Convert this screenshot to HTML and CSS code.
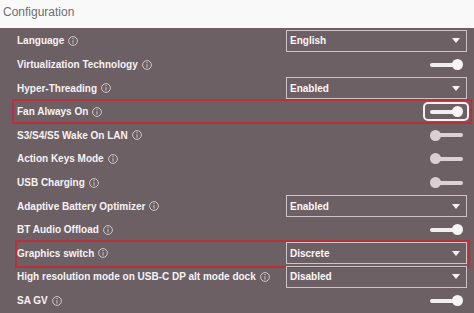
FILE: index.html
```html
<!DOCTYPE html>
<html lang="en">
<head>
<meta charset="utf-8">
<title>Configuration</title>
<link rel="stylesheet" href="styles.css">
</head>
<body>
<div class="screen">
  <div class="header">Configuration</div>
  <div class="panel">
    <div class="row">
      <span class="label">Language <svg class="info" viewBox="0 0 10 10"><circle cx="5" cy="5" r="4.4"/><line x1="5" y1="4.2" x2="5" y2="7.6"/><circle class="dot" cx="5" cy="2.7" r="0.6"/></svg></span>
      <div class="select"><span>English</span><i class="arrow"></i></div>
    </div>
    <div class="row">
      <span class="label">Virtualization Technology <svg class="info" viewBox="0 0 10 10"><circle cx="5" cy="5" r="4.4"/><line x1="5" y1="4.2" x2="5" y2="7.6"/><circle class="dot" cx="5" cy="2.7" r="0.6"/></svg></span>
      <div class="toggle on"><i class="track"></i><i class="knob"></i></div>
    </div>
    <div class="row">
      <span class="label">Hyper-Threading <svg class="info" viewBox="0 0 10 10"><circle cx="5" cy="5" r="4.4"/><line x1="5" y1="4.2" x2="5" y2="7.6"/><circle class="dot" cx="5" cy="2.7" r="0.6"/></svg></span>
      <div class="select"><span>Enabled</span><i class="arrow"></i></div>
    </div>
    <div class="row marked fan">
      <span class="label">Fan Always On <svg class="info" viewBox="0 0 10 10"><circle cx="5" cy="5" r="4.4"/><line x1="5" y1="4.2" x2="5" y2="7.6"/><circle class="dot" cx="5" cy="2.7" r="0.6"/></svg></span>
      <div class="focus"><div class="toggle on"><i class="track"></i><i class="knob"></i></div></div>
    </div>
    <div class="row">
      <span class="label">S3/S4/S5 Wake On LAN <svg class="info" viewBox="0 0 10 10"><circle cx="5" cy="5" r="4.4"/><line x1="5" y1="4.2" x2="5" y2="7.6"/><circle class="dot" cx="5" cy="2.7" r="0.6"/></svg></span>
      <div class="toggle off"><i class="knob"></i><i class="track"></i></div>
    </div>
    <div class="row">
      <span class="label">Action Keys Mode <svg class="info" viewBox="0 0 10 10"><circle cx="5" cy="5" r="4.4"/><line x1="5" y1="4.2" x2="5" y2="7.6"/><circle class="dot" cx="5" cy="2.7" r="0.6"/></svg></span>
      <div class="toggle off"><i class="knob"></i><i class="track"></i></div>
    </div>
    <div class="row">
      <span class="label">USB Charging <svg class="info" viewBox="0 0 10 10"><circle cx="5" cy="5" r="4.4"/><line x1="5" y1="4.2" x2="5" y2="7.6"/><circle class="dot" cx="5" cy="2.7" r="0.6"/></svg></span>
      <div class="toggle off"><i class="knob"></i><i class="track"></i></div>
    </div>
    <div class="row">
      <span class="label">Adaptive Battery Optimizer <svg class="info" viewBox="0 0 10 10"><circle cx="5" cy="5" r="4.4"/><line x1="5" y1="4.2" x2="5" y2="7.6"/><circle class="dot" cx="5" cy="2.7" r="0.6"/></svg></span>
      <div class="select"><span>Enabled</span><i class="arrow"></i></div>
    </div>
    <div class="row">
      <span class="label">BT Audio Offload <svg class="info" viewBox="0 0 10 10"><circle cx="5" cy="5" r="4.4"/><line x1="5" y1="4.2" x2="5" y2="7.6"/><circle class="dot" cx="5" cy="2.7" r="0.6"/></svg></span>
      <div class="toggle on"><i class="track"></i><i class="knob"></i></div>
    </div>
    <div class="row marked gfx">
      <span class="label">Graphics switch <svg class="info" viewBox="0 0 10 10"><circle cx="5" cy="5" r="4.4"/><line x1="5" y1="4.2" x2="5" y2="7.6"/><circle class="dot" cx="5" cy="2.7" r="0.6"/></svg></span>
      <div class="select"><span>Discrete</span><i class="arrow"></i></div>
    </div>
    <div class="row">
      <span class="label">High resolution mode on USB-C DP alt mode dock <svg class="info" viewBox="0 0 10 10"><circle cx="5" cy="5" r="4.4"/><line x1="5" y1="4.2" x2="5" y2="7.6"/><circle class="dot" cx="5" cy="2.7" r="0.6"/></svg></span>
      <div class="select"><span>Disabled</span><i class="arrow"></i></div>
    </div>
    <div class="row">
      <span class="label">SA GV <svg class="info" viewBox="0 0 10 10"><circle cx="5" cy="5" r="4.4"/><line x1="5" y1="4.2" x2="5" y2="7.6"/><circle class="dot" cx="5" cy="2.7" r="0.6"/></svg></span>
      <div class="toggle on"><i class="track"></i><i class="knob"></i></div>
    </div>
  </div>
</div>
</body>
</html>
```
FILE: styles.css
```css
html, body {
  margin: 0;
  padding: 0;
  background: #6d6064;
}
.screen {
  width: 474px;
  height: 313px;
  overflow: hidden;
  display: flex;
  flex-direction: column;
  font-family: "Liberation Sans", Arial, sans-serif;
}
.header {
  height: 28px;
  flex: none;
  box-sizing: border-box;
  padding: 5px 0 0 3px;
  background: #f9f9f9;
  color: #6e6e6e;
  font-size: 12px;
  line-height: 15px;
}
.panel {
  flex: 1;
  background: #6d6064;
  padding-top: 1.2px;
  display: flex;
  flex-direction: column;
}
.row {
  height: 23.6px;
  flex: none;
  display: flex;
  align-items: center;
  justify-content: space-between;
  padding: 0 7px 0 17px;
  position: relative;
}
.label {
  display: flex;
  align-items: center;
  gap: 4px;
  color: #f6f2f4;
  font-weight: bold;
  font-size: 10px;
  white-space: nowrap;
}
.info {
  width: 10px;
  height: 10px;
  fill: none;
  stroke: #d9d0d4;
  stroke-width: 0.9;
}
.info .dot {
  fill: #d9d0d4;
  stroke: none;
}
.select {
  width: 181px;
  height: 22px;
  box-sizing: border-box;
  border: 1px solid #cdc4c8;
  display: flex;
  align-items: center;
  justify-content: space-between;
  padding: 0 6px 0 3px;
  color: #fbf8f9;
  font-weight: bold;
  font-size: 10px;
}
.arrow {
  width: 0;
  height: 0;
  border-left: 4.5px solid transparent;
  border-right: 4.5px solid transparent;
  border-top: 5px solid #f6f2f4;
}
.toggle {
  width: 33px;
  height: 11px;
  display: flex;
  align-items: center;
  margin-right: 4px;
}
.toggle .track {
  flex: 1;
  height: 4px;
  border-radius: 2px;
  background: #f2eef0;
}
.toggle .knob {
  width: 11px;
  height: 11px;
  border-radius: 50%;
  background: #f7f4f5;
  flex: none;
}
.toggle.on .track {
  margin-right: -3px;
}
.toggle.off .track {
  margin-left: -3px;
  background: #ddd0d6;
}
.toggle.off .knob {
  background: #dccdd3;
}
.focus {
  width: 46px;
  height: 19px;
  box-sizing: border-box;
  border: 2px solid #f4f0f2;
  border-radius: 5px;
  display: flex;
  align-items: center;
  justify-content: flex-end;
  padding-right: 4px;
  margin-right: -2px;
}
.focus .toggle {
  margin-right: 0;
}
.marked::after {
  content: "";
  position: absolute;
  border: 2px solid #b7313b;
  box-sizing: border-box;
}
.fan::after {
  left: 12px;
  right: 2px;
  top: -0.5px;
  bottom: -0.5px;
}
.gfx::after {
  left: 15px;
  right: 4px;
  top: -2px;
  bottom: -3px;
}
```
